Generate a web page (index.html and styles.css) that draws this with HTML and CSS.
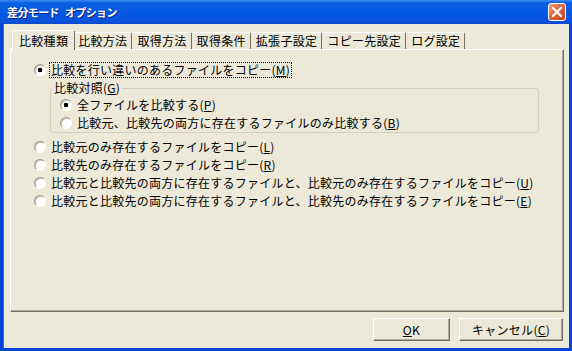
FILE: index.html
```html
<!DOCTYPE html>
<html lang="ja">
<head>
    <meta charset="UTF-8">
    <title>差分モード オプション</title>
    <link rel="stylesheet" href="styles.css">
</head>
<body>
    <div class="window">
        <!-- Title bar -->
        <div class="titlebar">
            <span class="title">差分モード オプション</span>
            <span class="close">
                <svg width="10" height="10" viewBox="0 0 10 10">
                    <path d="M1 1 L9 9 M9 1 L1 9" stroke="#fff" stroke-width="2" stroke-linecap="square"/>
                </svg>
            </span>
        </div>

        <div class="client">
            <!-- Tabs -->
            <div class="tabs">
                <div class="tab active">比較種類</div>
                <div class="tab">比較方法</div>
                <div class="tab">取得方法</div>
                <div class="tab">取得条件</div>
                <div class="tab">拡張子設定</div>
                <div class="tab">コピー先設定</div>
                <div class="tab">ログ設定</div>
            </div>

            <!-- Tab page -->
            <div class="panel">
                <div class="option">
                    <span class="radio checked"></span>
                    <span class="label focus">比較を行い違いのあるファイルをコピー(<u>M</u>)</span>
                </div>

                <fieldset class="group">
                    <legend>比較対照(<u>G</u>)</legend>
                    <div class="option inner">
                        <span class="radio checked"></span>
                        <span class="label">全ファイルを比較する(<u>P</u>)</span>
                    </div>
                    <div class="option inner">
                        <span class="radio"></span>
                        <span class="label">比較元、比較先の両方に存在するファイルのみ比較する(<u>B</u>)</span>
                    </div>
                </fieldset>

                <div class="option">
                    <span class="radio"></span>
                    <span class="label">比較元のみ存在するファイルをコピー(<u>L</u>)</span>
                </div>
                <div class="option">
                    <span class="radio"></span>
                    <span class="label">比較先のみ存在するファイルをコピー(<u>R</u>)</span>
                </div>
                <div class="option">
                    <span class="radio"></span>
                    <span class="label">比較元と比較先の両方に存在するファイルと、比較元のみ存在するファイルをコピー(<u>U</u>)</span>
                </div>
                <div class="option">
                    <span class="radio"></span>
                    <span class="label">比較元と比較先の両方に存在するファイルと、比較先のみ存在するファイルをコピー(<u>E</u>)</span>
                </div>
            </div>

            <!-- Dialog buttons -->
            <div class="buttons">
                <button class="btn ok"><u>O</u>K</button>
                <button class="btn cancel">キャンセル(<u>C</u>)</button>
            </div>
        </div>
    </div>
</body>
</html>
```

FILE: styles.css
```css
/* Page reset */
html, body {
    margin: 0;
    padding: 0;
    width: 572px;
    height: 351px;
    overflow: hidden;
}

body {
    font-family: "Noto Sans CJK JP", "Noto Sans", sans-serif;
    font-size: 12px;
    color: #000;
}

/* Window frame */
.window {
    width: 572px;
    height: 351px;
    display: flex;
    flex-direction: column;
    background: #0842D6;
    box-sizing: border-box;
}

/* Title bar */
.titlebar {
    height: 24px;
    display: flex;
    align-items: center;
    background: linear-gradient(#3B8CF5 0%, #0A5FE0 12%, #0457E3 60%, #0A52D8 90%, #0848CF 100%);
    flex-shrink: 0;
}

.title {
    padding-left: 7px;
    color: #fff;
    font-weight: bold;
    font-size: 11px;
    letter-spacing: -0.6px;
    word-spacing: 4px;
    text-shadow: 1px 1px 0 #0A1F8A;
}

.close {
    margin-left: auto;
    margin-right: 6px;
    width: 18px;
    height: 18px;
    box-sizing: border-box;
    border: 1px solid #fff;
    border-radius: 3px;
    background: linear-gradient(135deg, #EE9C7E 0%, #DB6B45 45%, #C2431B 100%);
    display: flex;
    align-items: center;
    justify-content: center;
}

/* Client area */
.client {
    flex: 1;
    margin: 0 3px 3px 3px;
    padding: 6px 5px 0 6px;
    background: #ECE9D8;
    border-left: 1px solid #2E6FE6;
    display: flex;
    flex-direction: column;
}

/* Tabs */
.tabs {
    display: flex;
    align-items: flex-end;
    height: 19px;
    padding-left: 4px;
    letter-spacing: 0.3px;
}

.tab {
    height: 17px;
    box-sizing: border-box;
    padding: 0 4px;
    line-height: 16px;
    border-top: 1px solid #fff;
    border-left: 1px solid #fff;
    border-right: 1px solid #716F64;
    border-top-left-radius: 2px;
    border-top-right-radius: 2px;
    background: #ECE9D8;
    white-space: nowrap;
}

.tab + .tab {
    border-left-color: #ECE9D8;
}

.tab.active {
    position: relative;
    z-index: 1;
    height: 20px;
    margin: 0 -2px -1px -2px;
    padding: 2px 6px 0 6px;
    border-left-color: #fff;
}

/* Tab page */
.panel {
    height: 263px;
    box-sizing: border-box;
    padding: 11px 0 0 23px;
    border: 1px solid;
    border-color: #fff #716F64 #716F64 #fff;
    box-shadow: inset -1px -1px 0 #ACA899;
    background: #ECE9D8;
    letter-spacing: 0.25px;
}

/* Radio options */
.option {
    display: flex;
    align-items: center;
    height: 18px;
    white-space: nowrap;
}

.option.inner {
    margin-left: 9px;
}

.radio {
    width: 12px;
    height: 12px;
    box-sizing: border-box;
    border-radius: 50%;
    border: 1px solid;
    border-color: #9A9890 #fff #fff #9A9890;
    box-shadow: inset 1px 1px 0 #C9C6B8;
    background: #fff;
    flex-shrink: 0;
}

.radio.checked {
    background: radial-gradient(circle, #000 0, #000 2px, #fff 2.6px);
}

.label {
    margin-left: 3px;
    padding: 0 1px;
    line-height: 14px;
    border: 1px dotted transparent;
}

.label.focus {
    border-color: #000;
}

/* Group box */
.group {
    margin: 2px 24px 5px 16px;
    padding: 1px 0 0 0;
    min-width: 0;
    border: 1px solid #D0D0BF;
    border-radius: 3px;
}

.group legend {
    margin-left: 1px;
    padding: 0 2px;
    line-height: 14px;
}

/* Dialog buttons */
.buttons {
    display: flex;
    justify-content: flex-end;
    gap: 9px;
    margin-top: 6px;
    margin-right: 1px;
}

.btn {
    height: 23px;
    box-sizing: border-box;
    font-family: "Noto Sans CJK JP", "Noto Sans", sans-serif;
    font-size: 12px;
    letter-spacing: 0.3px;
    color: #000;
    background: #ECE9D8;
    border: 1px solid;
    border-color: #fff #716F64 #716F64 #fff;
    box-shadow: inset -1px -1px 0 #ACA899;
    padding: 0;
}

.btn.ok {
    width: 77px;
}

.btn.cancel {
    width: 104px;
}
```
